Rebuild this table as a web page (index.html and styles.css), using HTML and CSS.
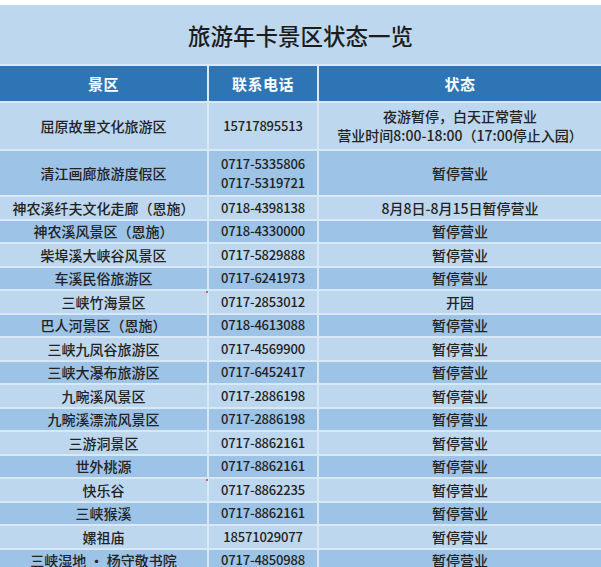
FILE: index.html
```html
<!DOCTYPE html>
<html lang="zh-CN">
<head>
<meta charset="utf-8">
<title>旅游年卡景区状态一览</title>
<link rel="stylesheet" href="styles.css">
</head>
<body>
<div class="page">
  <div class="title">旅游年卡景区状态一览</div>
  <div class="table">
    <div class="row head"><div class="cell">景区</div><div class="cell">联系电话</div><div class="cell">状态</div></div>
    <div class="row light"><div class="cell">屈原故里文化旅游区</div><div class="cell num">15717895513</div><div class="cell multi">夜游暂停，白天正常营业<br>营业时间8:00-18:00（17:00停止入园）</div></div>
    <div class="row mid"><div class="cell">清江画廊旅游度假区</div><div class="cell num multi">0717-5335806<br>0717-5319721</div><div class="cell">暂停营业</div></div>
    <div class="row light"><div class="cell">神农溪纤夫文化走廊（恩施）</div><div class="cell num">0718-4398138</div><div class="cell">8月8日-8月15日暂停营业</div></div>
    <div class="row mid"><div class="cell">神农溪风景区（恩施）</div><div class="cell num">0718-4330000</div><div class="cell">暂停营业</div></div>
    <div class="row light"><div class="cell">柴埠溪大峡谷风景区</div><div class="cell num">0717-5829888</div><div class="cell">暂停营业</div></div>
    <div class="row mid"><div class="cell">车溪民俗旅游区</div><div class="cell num">0717-6241973</div><div class="cell">暂停营业</div></div>
    <div class="row light"><div class="cell">三峡竹海景区</div><div class="cell num dot-host">0717-2853012<span class="dot"></span></div><div class="cell">开园</div></div>
    <div class="row mid"><div class="cell">巴人河景区（恩施）</div><div class="cell num">0718-4613088</div><div class="cell">暂停营业</div></div>
    <div class="row light"><div class="cell">三峡九凤谷旅游区</div><div class="cell num">0717-4569900</div><div class="cell">暂停营业</div></div>
    <div class="row mid"><div class="cell">三峡大瀑布旅游区</div><div class="cell num">0717-6452417</div><div class="cell">暂停营业</div></div>
    <div class="row light"><div class="cell">九畹溪风景区</div><div class="cell num">0717-2886198</div><div class="cell">暂停营业</div></div>
    <div class="row mid"><div class="cell">九畹溪漂流风景区</div><div class="cell num">0717-2886198</div><div class="cell">暂停营业</div></div>
    <div class="row light"><div class="cell">三游洞景区</div><div class="cell num">0717-8862161</div><div class="cell">暂停营业</div></div>
    <div class="row mid"><div class="cell">世外桃源</div><div class="cell num">0717-8862161</div><div class="cell">暂停营业</div></div>
    <div class="row light"><div class="cell">快乐谷</div><div class="cell num dot-host">0717-8862235<span class="dot"></span></div><div class="cell">暂停营业</div></div>
    <div class="row mid"><div class="cell">三峡猴溪</div><div class="cell num">0717-8862161</div><div class="cell">暂停营业</div></div>
    <div class="row light"><div class="cell">嫘祖庙</div><div class="cell num">18571029077</div><div class="cell">暂停营业</div></div>
    <div class="row mid"><div class="cell">三峡湿地 · 杨守敬书院</div><div class="cell num">0717-4850988</div><div class="cell">暂停营业</div></div>
  </div>
</div>
</body>
</html>
```
FILE: styles.css
```css
html, body {
  margin: 0;
  padding: 0;
  height: 100%;
  overflow: hidden;
  background: #ffffff;
}
.page {
  padding-top: 5px;
  font-family: "Noto Sans CJK SC", "Noto Sans", sans-serif;
  color: #1e1e1e;
}
.title {
  height: 59px;
  background: #bdd7ee;
  display: flex;
  align-items: center;
  justify-content: center;
  font-size: 22.5px;
  font-weight: 500;
  color: #1c1c1c;
  border-bottom: 2px solid #d9e8f5;
}
.table {
  display: grid;
  grid-template-columns: 207px 108px 1fr;
  grid-template-rows: 35px 46px 44px;
  grid-auto-rows: 21.5px;
  gap: 2px;
  background: #d9e8f5;
}
.row {
  display: contents;
}
.cell {
  display: flex;
  align-items: center;
  justify-content: center;
  text-align: center;
  font-size: 14px;
  font-weight: 500;
  line-height: 20px;
  white-space: nowrap;
  color: #222222;
}
.head .cell {
  background: #2e75b6;
  color: #ffffff;
  font-weight: 700;
  font-size: 15px;
  letter-spacing: 0.5px;
}
.light .cell {
  background: #bdd7ee;
}
.mid .cell {
  background: #9dc3e6;
}
.num {
  font-size: 13px;
  letter-spacing: -0.2px;
}
.multi {
  line-height: 19.5px;
}
.dot-host {
  position: relative;
}
.dot {
  position: absolute;
  left: -3px;
  top: 0;
  width: 2px;
  height: 2px;
  border-radius: 1px;
  background: #e0302a;
}
```
